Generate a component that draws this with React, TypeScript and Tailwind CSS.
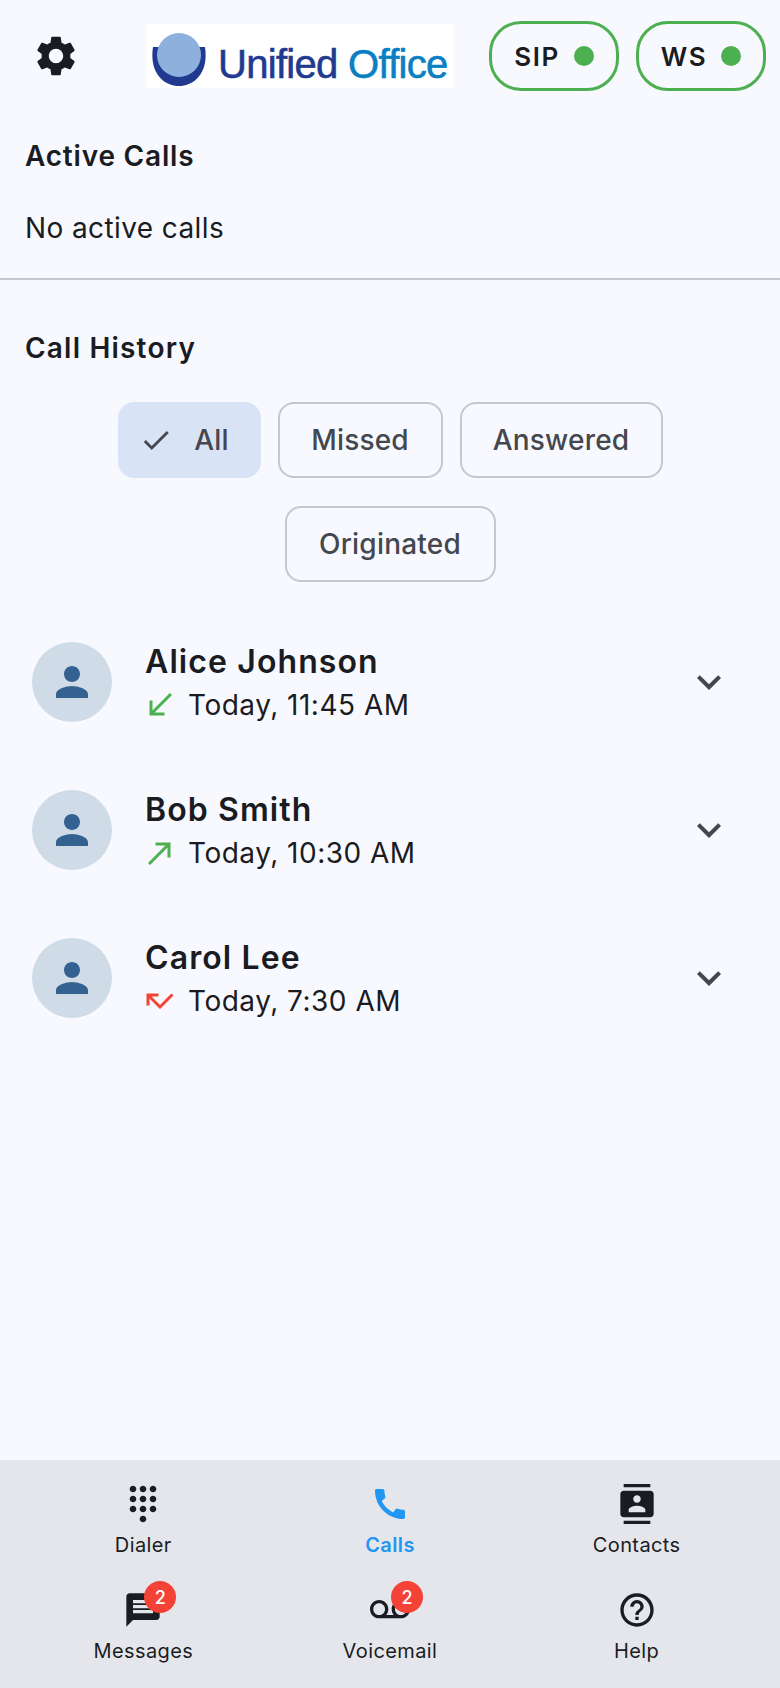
import type { ReactNode } from 'react';
import {
  MdCall,
  MdCallMade,
  MdCallMissed,
  MdCallReceived,
  MdCheck,
  MdContacts,
  MdDialpad,
  MdExpandMore,
  MdHelpOutline,
  MdMessage,
  MdPerson,
  MdSettings,
  MdVoicemail,
} from 'react-icons/md';

const filters = [
  { label: 'All', selected: true, width: 'w-[143px]' },
  { label: 'Missed', selected: false, width: 'w-[165px]' },
  { label: 'Answered', selected: false, width: 'w-[203px]' },
  { label: 'Originated', selected: false, width: 'w-[211px]' },
];

const calls = [
  { name: 'Alice Johnson', time: 'Today, 11:45 AM', kind: 'received' },
  { name: 'Bob Smith', time: 'Today, 10:30 AM', kind: 'made' },
  { name: 'Carol Lee', time: 'Today, 7:30 AM', kind: 'missed' },
];

function StatusPill({ label }: { label: string }) {
  return (
    <div className="flex h-[70px] w-[130px] items-center justify-center gap-[14px] rounded-[32px] border-[3px] border-[#4caf50]">
      <span className="text-[26px] font-semibold tracking-[1.5px] text-[#1a1c22]">{label}</span>
      <span className="h-[20px] w-[20px] rounded-full bg-[#4caf50]" />
    </div>
  );
}

function Logo() {
  return (
    <div className="flex h-[64px] w-[308px] items-start gap-[12px] bg-white pl-[6px]">
      <svg width="54" height="54" viewBox="0 0 54 54" className="mt-[9px] shrink-0">
        <path d="M1 14 C-3 40 12 53 27 53 C42 53 57 40 53 14 L46 14 C48 30 40 42 27 42 C14 42 6 30 8 14 Z" fill="#1f3a8f" />
        <circle cx="27" cy="22" r="22" fill="#8db0dc" />
      </svg>
      <span className="mt-[20px] whitespace-nowrap font-['Liberation_Sans',sans-serif] text-[40px] leading-[40px] tracking-[-0.7px] [-webkit-text-stroke:0.6px]">
        <span className="text-[#1f3a8f]">Unified</span> <span className="text-[#0a7fc4]">Office</span>
      </span>
    </div>
  );
}

function Header() {
  return (
    <header className="flex h-[112px] items-center pl-[32px]">
      <MdSettings size={48} className="text-[#1a1c22]" />
      <div className="ml-[66px]">
        <Logo />
      </div>
      <div className="ml-[35px] flex gap-[17px]">
        <StatusPill label="SIP" />
        <StatusPill label="WS" />
      </div>
    </header>
  );
}

function CallIcon({ kind }: { kind: string }) {
  if (kind === 'made') return <MdCallMade size={36} className="text-[#4caf50]" />;
  if (kind === 'missed') return <MdCallMissed size={36} className="text-[#f44336]" />;
  return <MdCallReceived size={36} className="text-[#4caf50]" />;
}

function CallRow({ name, time, kind }: { name: string; time: string; kind: string }) {
  return (
    <div className="flex h-[148px] items-start pl-[32px] pr-[47px]">
      <div className="flex h-[80px] w-[80px] shrink-0 items-center justify-center rounded-full bg-[#d0dbe8]">
        <MdPerson size={48} className="text-[#336190]" />
      </div>
      <div className="ml-[33px] flex-1">
        <div className="text-[32px] leading-[40px] font-semibold tracking-[1.1px] text-[#1a1c22]">{name}</div>
        <div className="mt-[5px] -ml-[3px] flex items-center gap-[10px]">
          <CallIcon kind={kind} />
          <span className="text-[28px] leading-[36px] tracking-[0.5px] text-[#1a1c22]">{time}</span>
        </div>
      </div>
      <MdExpandMore size={48} className="mt-[16px] text-[#44474e]" />
    </div>
  );
}

function NavItem({ icon, label, active }: { icon: ReactNode; label: string; active?: boolean }) {
  return (
    <div className={`flex flex-col items-center ${active ? 'text-[#2196f3]' : 'text-[#1a1c22]'}`}>
      <div className="relative flex h-[40px] w-[40px] items-center justify-center">{icon}</div>
      <span className={`mt-[7px] text-[20px] leading-[28px] tracking-[0.4px] ${active ? 'font-semibold' : ''}`}>{label}</span>
    </div>
  );
}

function Badge() {
  return (
    <span className="absolute left-[21px] top-[-9px] flex h-[32px] w-[32px] items-center justify-center rounded-full bg-[#f44336] text-[18px] font-medium text-white">
      2
    </span>
  );
}

export default function App() {
  return (
    <div className="flex h-[1688px] w-[780px] flex-col bg-[#f8f9ff] font-['Inter',sans-serif]">
      <Header />

      <section className="h-[168px] border-b-2 border-[#c4c7d0] px-[25px]">
        <h2 className="mt-[26px] text-[28px] leading-[36px] font-semibold tracking-[0.8px] text-[#1a1c22]">Active Calls</h2>
        <p className="mt-[36px] text-[28px] leading-[36px] tracking-[0.4px] text-[#1a1c22]">No active calls</p>
      </section>

      <section className="flex-1">
        <h2 className="mt-[50px] px-[25px] text-[28px] leading-[36px] font-semibold tracking-[1.2px] text-[#1a1c22]">Call History</h2>
        <div className="mt-[36px] flex flex-wrap justify-center gap-x-[17px] gap-y-[28px] px-[24px]">
          {filters.map((f) => (
            <div
              key={f.label}
              className={`flex h-[76px] items-center justify-center rounded-[16px] text-[28px] font-medium tracking-[0.2px] text-[#44474e] ${f.width} ${
                f.selected ? 'gap-[21px] bg-[#d8e4f6] pr-[10px]' : 'border-2 border-[#c4c7d0]'
              }`}
            >
              {f.selected && <MdCheck size={34} className="text-[#44474e]" />}
              {f.label}
            </div>
          ))}
        </div>
        <div className="mt-[60px]">
          {calls.map((c) => (
            <CallRow key={c.name} {...c} />
          ))}
        </div>
      </section>

      <nav className="h-[228px] bg-[#e5e6ec] pt-[24px]">
        <div className="mx-auto grid w-[740px] grid-cols-3 gap-y-[31px]">
          <NavItem icon={<MdDialpad size={40} />} label="Dialer" />
          <NavItem icon={<MdCall size={40} />} label="Calls" active />
          <NavItem icon={<MdContacts size={40} />} label="Contacts" />
          <NavItem icon={<><MdMessage size={40} /><Badge /></>} label="Messages" />
          <NavItem icon={<><MdVoicemail size={40} /><Badge /></>} label="Voicemail" />
          <NavItem icon={<MdHelpOutline size={40} />} label="Help" />
        </div>
      </nav>
    </div>
  );
}
